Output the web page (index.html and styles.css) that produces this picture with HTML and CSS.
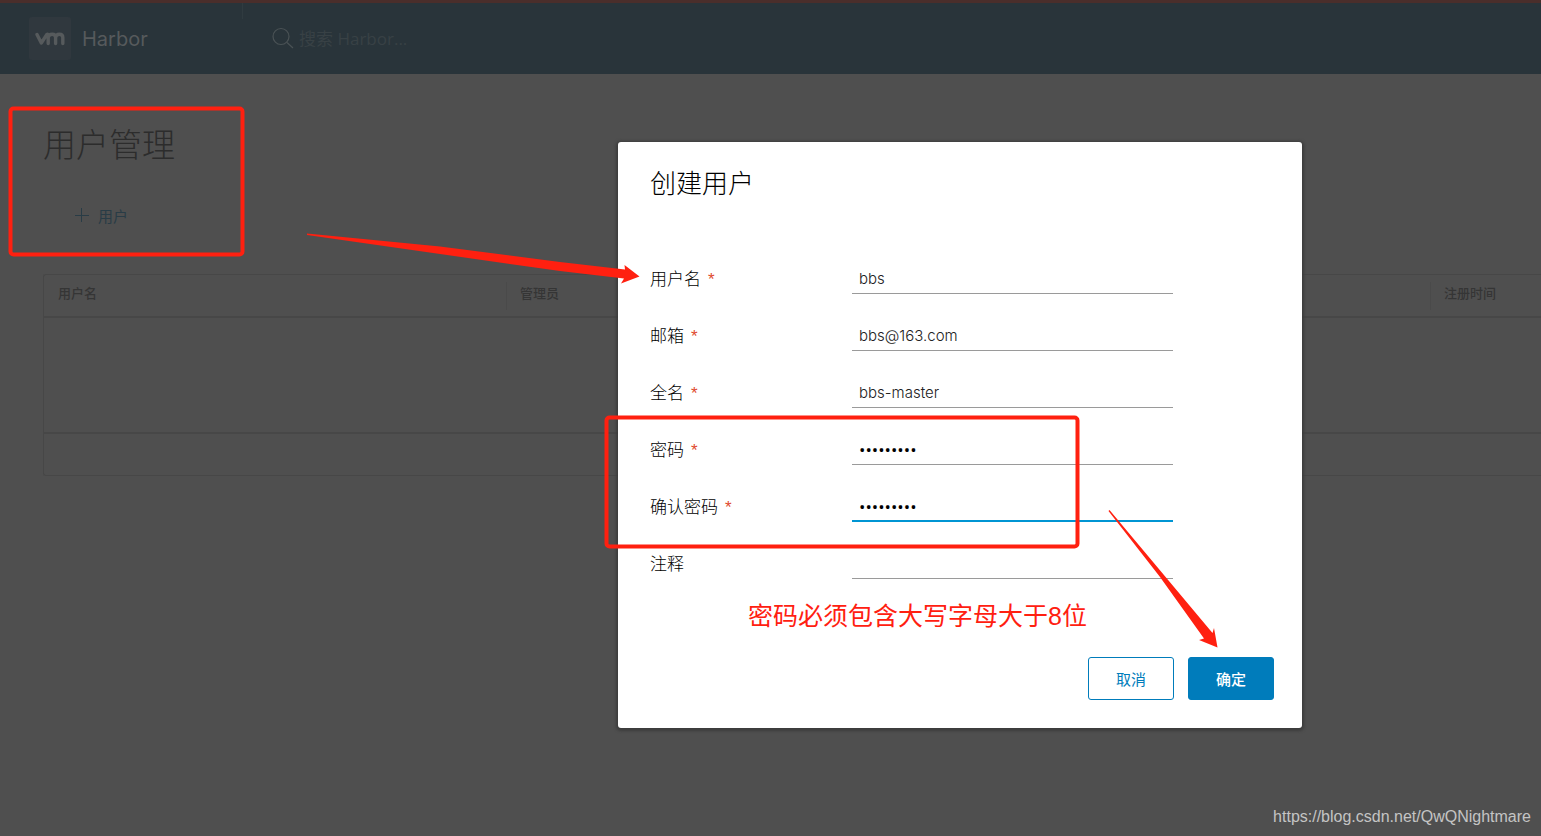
FILE: index.html
```html
<!DOCTYPE html>
<html lang="zh-CN">
<head>
<meta charset="utf-8">
<title>Harbor</title>
<link rel="stylesheet" href="styles.css">
</head>
<body>
<header class="header">
  <a class="brand" href="#">
    <span class="logo">
      <svg width="30" height="14" viewBox="0 0 30 14" fill="none" stroke="#565a5c" stroke-width="3.4" stroke-linecap="round" stroke-linejoin="round" aria-hidden="true"><path d="M2 2.5 L6.3 11 L12 2.3 Q12.7 1.8 13.2 3 V11.5 M13.2 5.5 Q13.6 2.3 17.2 2.3 Q20.6 2.3 20.6 5.5 V11.5 M20.6 5.5 Q21 2.3 24.4 2.3 Q27.8 2.3 27.8 5.5 V11.5"/></svg>
    </span>
    <span class="brand-name">Harbor</span>
  </a>
  <label class="search">
    <svg width="23" height="23" viewBox="0 0 23 23" fill="none" stroke="#4a5255" stroke-width="1.2" aria-hidden="true"><circle cx="9" cy="9.5" r="8"/><path d="M15 15.5 L21 21"/></svg>
    <input class="search-input" type="text" placeholder="搜索 Harbor..." aria-label="搜索 Harbor">
  </label>
</header>
<main class="page">
  <h1 class="page-title">用户管理</h1>
  <button class="add-user" type="button">
    <svg width="14" height="14" viewBox="0 0 14 14" stroke="#293c46" stroke-width="1" aria-hidden="true"><path d="M6.5 0V14M0 7.5H14"/></svg>
    用户
  </button>
  <div class="grid">
    <table class="users">
      <thead>
        <tr><th>用户名</th><th>管理员</th><th></th><th>注册时间</th></tr>
      </thead>
      <tbody><tr><td colspan="4"></td></tr></tbody>
      <tfoot><tr><td colspan="4"></td></tr></tfoot>
    </table>
  </div>
</main>

<section class="modal" role="dialog" aria-labelledby="dialog-title">
  <h2 class="modal-title" id="dialog-title">创建用户</h2>
  <form class="form">
    <div class="row"><label for="username">用户名<span class="required">*</span></label><input class="field" id="username" type="text" value="bbs"></div>
    <div class="row"><label for="email">邮箱<span class="required">*</span></label><input class="field" id="email" type="text" value="bbs@163.com"></div>
    <div class="row"><label for="fullname">全名<span class="required">*</span></label><input class="field" id="fullname" type="text" value="bbs-master"></div>
    <div class="row"><label for="password">密码<span class="required">*</span></label><input class="field secret" id="password" type="password" value="Harbor123"></div>
    <div class="row"><label for="confirm">确认密码<span class="required">*</span></label><input class="field secret active" id="confirm" type="password" value="Harbor123"></div>
    <div class="row"><label for="comment">注释</label><input class="field" id="comment" type="text"></div>
  </form>
  <div class="actions">
    <button class="btn" type="button">取消</button>
    <button class="btn primary" type="button">确定</button>
  </div>
</section>

<svg class="marks" width="1541" height="836" viewBox="0 0 1541 836" aria-hidden="true">
  <g fill="none" stroke="#ff2010" stroke-width="4">
    <rect x="10.500" y="108.500" width="232" height="146" rx="3"/>
    <rect x="606.500" y="417.500" width="471" height="129" rx="3"/>
  </g>
  <g fill="#ff2010">
    <path d="M307 233.500 L440 246.500 L560 262 L625 269.500 L624.500 265 L639.500 276.500 L621 283.500 L624 278.500 L560 271 L440 254 L307 235 Z"/>
    <path d="M1109.500 510 L1212.500 633 L1214 628 L1217.500 647.500 L1199 640 L1204 638.500 L1160 577 L1108.500 511 Z"/>
  </g>
</svg>
<p class="note">密码必须包含大写字母大于8位</p>
<p class="watermark">https://blog.csdn.net/QwQNightmare</p>
</body>
</html>
```
FILE: styles.css
```css
* { box-sizing: border-box; }
body {
  position: relative;
  min-height: 100vh;
  margin: 0;
  overflow: hidden;
  background: #4f4f4f;
  font-family: "Open Sans", "Noto Sans CJK SC", sans-serif;
}
input, button { font-family: inherit; }
.header {
  display: flex;
  align-items: flex-start;
  height: 74px;
  border-top: 3px solid #4a2e2b;
  background: #29343a;
}
.brand {
  display: flex;
  align-items: center;
  gap: 11px;
  width: 243px;
  padding: 14px 0 0 29px;
  text-decoration: none;
  background: linear-gradient(#303b40, #303b40) right top / 1px 16px no-repeat;
}
.logo {
  display: flex;
  align-items: center;
  justify-content: center;
  width: 42px;
  height: 43px;
  border-radius: 3px;
  background: #30383e;
}
.brand-name {
  color: #565a5c;
  font-family: Inter, sans-serif;
  font-size: 20px;
  line-height: 24px;
}
.search {
  display: flex;
  align-items: center;
  gap: 4px;
  padding: 22px 0 0 29px;
}
.search-input {
  width: 200px;
  height: 26px;
  padding: 0;
  border: 0;
  outline: 0;
  background: none;
  font-size: 17px;
}
.search-input::placeholder { color: #384145; opacity: 1; }
.page { padding: 45px 0 0 43px; }
.page-title {
  margin: 0;
  color: #2c2c2c;
  font-family: "Noto Sans CJK SC", sans-serif;
  font-size: 33px;
  font-weight: 200;
  line-height: 48px;
}
.add-user {
  display: flex;
  align-items: center;
  gap: 9px;
  margin: 36px 0 0 32px;
  padding: 0;
  height: 24px;
  border: 0;
  background: none;
  color: #293c46;
  font-size: 15px;
}
.grid {
  margin-top: 47px;
  border: 1px solid #474747;
  border-right: 0;
  border-radius: 3px 0 0 3px;
}
.users {
  width: 100%;
  table-layout: fixed;
  border-collapse: collapse;
}
.users th {
  width: 462px;
  height: 42px;
  padding: 0 14px 5px;
  background: linear-gradient(#4a4a4a, #4a4a4a) left center / 1px 28px no-repeat;
  color: #353535;
  font-size: 13px;
  font-weight: 500;
  line-height: 20px;
  text-align: left;
}
.users th:first-child { background: none; }
.users th:last-child { width: auto; white-space: nowrap; }
.users tbody td { height: 116px; border-top: 2px solid #474747; }
.users tfoot td { height: 42px; border-top: 2px solid #474747; }

.modal {
  position: absolute;
  top: 142px;
  left: 618px;
  width: 684px;
  padding: 23px 28px 28px 32px;
  border-radius: 3px;
  background: #fff;
  box-shadow: 0 1px 3px 2px #3c3c3c;
}
.modal-title {
  margin: 0 0 65px;
  color: #000;
  font-family: "Noto Sans CJK SC", sans-serif;
  font-size: 26px;
  font-weight: 200;
  line-height: 34px;
}
.form { display: grid; gap: 27px; }
.row {
  display: grid;
  grid-template-columns: 202px 321px;
  align-items: center;
  color: #000;
  font-size: 17px;
  font-weight: 300;
  line-height: 30px;
}
.required {
  margin-left: 7px;
  color: #e0492f;
  font-family: "Liberation Sans", sans-serif;
  font-size: 17px;
  line-height: 20px;
}
.field {
  height: 30px;
  padding: 0 7px;
  border: 0;
  border-bottom: 1px solid #9a9a9a;
  border-radius: 0;
  outline: 0;
  background: none;
  color: #222;
  font-family: Inter, sans-serif;
  font-size: 15px;
  font-weight: 300;
}
.secret { color: #000; font-family: "Open Sans", sans-serif; font-size: 17px; font-weight: 400; }
.active { border-bottom: 2px solid #0095d3; }
.actions {
  display: flex;
  justify-content: flex-end;
  gap: 14px;
  margin-top: 78px;
}
.btn {
  width: 86px;
  height: 43px;
  padding: 0;
  border: 1px solid #007cbb;
  border-radius: 3px;
  background: #fff;
  color: #007cbb;
  font-size: 15px;
}
.primary { background: #007cbb; color: #fff; font-weight: 500; }

.marks { position: absolute; top: 0; left: 0; pointer-events: none; }
.note {
  position: absolute;
  top: 598px;
  left: 748px;
  margin: 0;
  color: #ff2010;
  font-family: "Liberation Sans", "Noto Sans CJK SC", sans-serif;
  font-size: 25px;
  line-height: 36px;
  white-space: nowrap;
}
.watermark {
  position: absolute;
  right: 10px;
  bottom: 8px;
  margin: 0;
  color: #c4c4c4;
  font-family: "Liberation Sans", sans-serif;
  font-size: 16px;
  line-height: 22px;
}
```
